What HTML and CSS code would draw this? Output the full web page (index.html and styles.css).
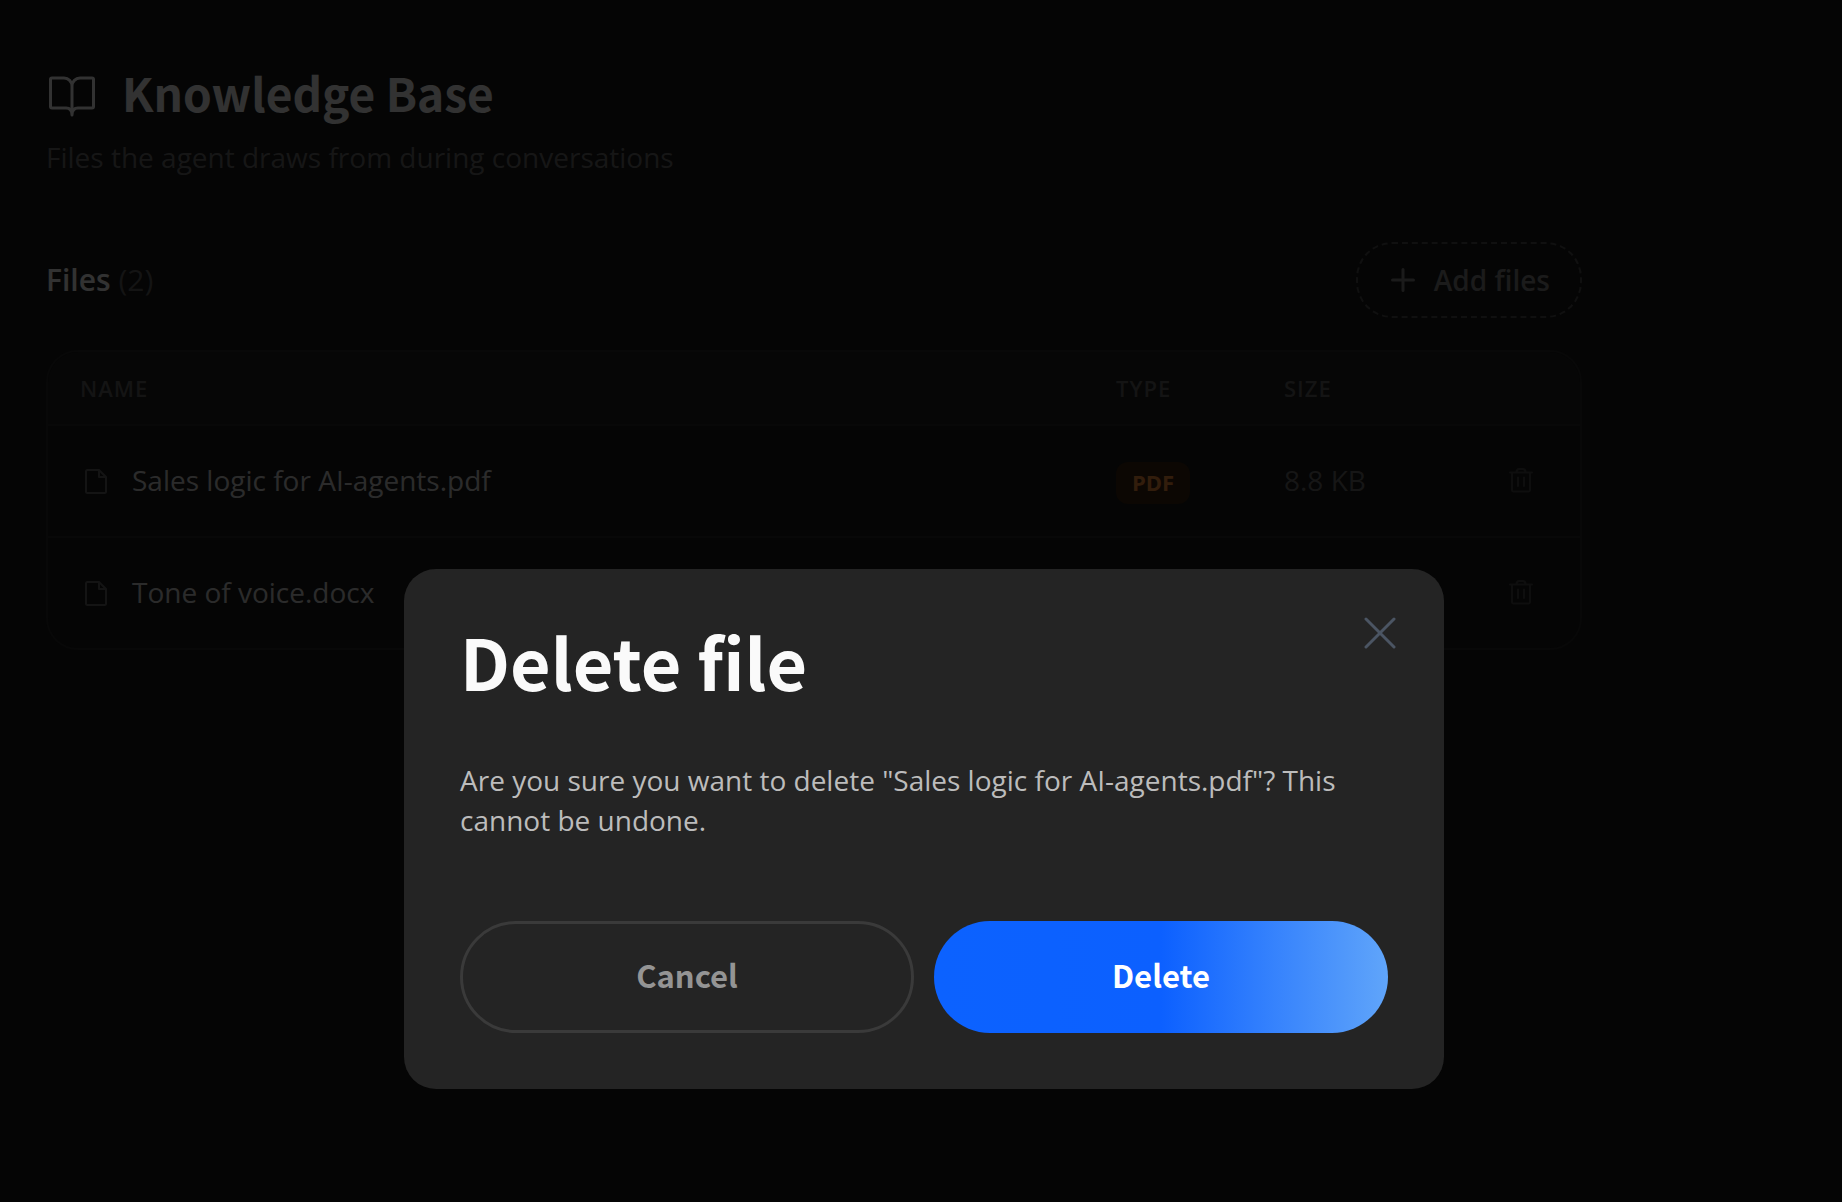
FILE: index.html
```html
<!DOCTYPE html>
<html lang="en">
<head>
<meta charset="utf-8">
<title>Knowledge Base</title>
<link rel="stylesheet" href="styles.css">
</head>
<body>
<main class="page">
  <header class="page-header">
    <div class="title-row">
      <svg class="title-icon" viewBox="0 2 52 56" aria-hidden="true"><path d="M26 24a8 8 0 0 0-8-8H6a1.500 1.500 0 0 0-1.500 1.500v27A1.500 1.500 0 0 0 6 46h14c4 0 6 2 6 7 0-5 2-7 6-7h14a1.500 1.500 0 0 0 1.500-1.500v-27A1.500 1.500 0 0 0 46 16H34a8 8 0 0 0-8 8v28"/></svg>
      <h1>Knowledge Base</h1>
    </div>
    <p class="subtitle">Files the agent draws from during conversations</p>
  </header>

  <section>
    <div class="section-header">
      <h2 class="section-title">Files <span class="count">(2)</span></h2>
      <button class="add-button" type="button">
        <svg class="plus-icon" viewBox="0 0 30 30" aria-hidden="true"><path d="M15 4.500v21M4.500 15h21"/></svg>
        <span>Add files</span>
      </button>
    </div>

    <div class="file-card">
      <table class="file-table">
        <thead>
          <tr>
            <th class="col-name" scope="col">NAME</th>
            <th class="col-type" scope="col">TYPE</th>
            <th class="col-size" scope="col">SIZE</th>
            <td class="col-action"></td>
          </tr>
        </thead>
        <tbody>
          <tr>
            <td class="col-name">
              <div class="file-name">
                <svg class="file-icon" viewBox="0 0 32 40" aria-hidden="true"><path d="M19 10H7.500A1.500 1.500 0 0 0 6 11.500v20A1.500 1.500 0 0 0 7.500 33h17a1.500 1.500 0 0 0 1.500-1.500V17zv7h7"/></svg>
                <span>Sales logic for AI-agents.pdf</span>
              </div>
            </td>
            <td><span class="badge badge-pdf">PDF</span></td>
            <td class="size">8.8 KB</td>
            <td class="col-action">
              <button class="icon-button" type="button" aria-label="Delete Sales logic for AI-agents.pdf">
                <svg viewBox="0 0 32 32" aria-hidden="true"><path d="M6 7.500h22M12.500 7.500C12.500 5 13.500 4 15 4h4c1.500 0 2.500 1 2.500 3.500M8 7.500V25a1.500 1.500 0 0 0 1.500 1.500h15A1.500 1.500 0 0 0 26 25V7.500M14 12.500V21M20 12.500V21"/></svg>
              </button>
            </td>
          </tr>
          <tr>
            <td class="col-name">
              <div class="file-name">
                <svg class="file-icon" viewBox="0 0 32 40" aria-hidden="true"><path d="M19 10H7.500A1.500 1.500 0 0 0 6 11.500v20A1.500 1.500 0 0 0 7.500 33h17a1.500 1.500 0 0 0 1.500-1.500V17zv7h7"/></svg>
                <span>Tone of voice.docx</span>
              </div>
            </td>
            <td></td>
            <td></td>
            <td class="col-action">
              <button class="icon-button" type="button" aria-label="Delete Tone of voice.docx">
                <svg viewBox="0 0 32 32" aria-hidden="true"><path d="M6 7.500h22M12.500 7.500C12.500 5 13.500 4 15 4h4c1.500 0 2.500 1 2.500 3.500M8 7.500V25a1.500 1.500 0 0 0 1.500 1.500h15A1.500 1.500 0 0 0 26 25V7.500M14 12.500V21M20 12.500V21"/></svg>
              </button>
            </td>
          </tr>
        </tbody>
      </table>
    </div>
  </section>
</main>

<div class="overlay">
  <div class="dialog" role="dialog" aria-modal="true" aria-labelledby="dialog-title">
    <button class="close-button" type="button" aria-label="Close">
      <svg viewBox="0 0 32 32" aria-hidden="true"><path d="M2 2l28 28M30 2L2 30"/></svg>
    </button>
    <h2 class="dialog-title" id="dialog-title">Delete file</h2>
    <p class="dialog-text">Are you sure you want to delete "Sales logic for AI-agents.pdf"? This cannot be undone.</p>
    <div class="dialog-actions">
      <button class="button button-outline" type="button">Cancel</button>
      <button class="button button-primary" type="button">Delete</button>
    </div>
  </div>
</div>
</body>
</html>
```
FILE: styles.css
```css
*,
*::before,
*::after {
  box-sizing: border-box;
}

body {
  margin: 0;
  min-height: 100vh;
  background: #191919;
  color: #fafafa;
  font-family: "Open Sans", sans-serif;
  font-size: 28px;
  line-height: 40px;
}

h1,
h2,
p {
  margin: 0;
}

button {
  margin: 0;
  padding: 0;
  border: 0;
  background: none;
  color: inherit;
  font: inherit;
  cursor: pointer;
}

svg {
  display: block;
  fill: none;
  stroke: currentColor;
  stroke-linecap: round;
  stroke-linejoin: round;
}

h1,
.dialog-title,
.button {
  font-family: "Noto Sans CJK JP", "Open Sans", sans-serif;
  font-weight: 700;
}

/* Page */
.page {
  max-width: 1582px;
  padding: 63px 0 48px 46px;
}

.page-header {
  margin-bottom: 65px;
}

.title-row {
  display: flex;
  align-items: center;
  gap: 24px;
  margin-bottom: 16px;
}

.title-icon {
  width: 52px;
  height: 56px;
  stroke-width: 3;
}

h1 {
  font-size: 46px;
  line-height: 58px;
}

.subtitle {
  color: #707070;
}

.section-header {
  display: flex;
  align-items: center;
  justify-content: space-between;
  margin-bottom: 32px;
}

.section-title {
  font-size: 30px;
  font-weight: 600;
}

.count {
  color: #646464;
  font-weight: 400;
}

.add-button {
  display: flex;
  align-items: center;
  gap: 16px;
  height: 76px;
  padding: 0 30px;
  border: 2px dashed #505050;
  border-radius: 36px;
  color: #868686;
  font-weight: 600;
}

.plus-icon {
  width: 30px;
  height: 30px;
  stroke-width: 3;
}

/* File table */
.file-card {
  overflow: hidden;
  border: 2px solid #282828;
  border-radius: 32px;
}

.file-table {
  width: 100%;
  border-collapse: separate;
  border-spacing: 0;
  table-layout: fixed;
}

.file-table th,
.file-table td {
  padding: 0;
  text-align: left;
}

.file-table thead th,
.file-table thead td {
  height: 74px;
  border-bottom: 2px solid #282828;
  background: #1e1e1e;
  color: #646464;
  font-size: 22px;
  font-weight: 600;
  letter-spacing: 1px;
}

.file-table tbody td {
  height: 110px;
  padding-top: 34px;
  vertical-align: top;
}

.file-table tbody tr:not(:last-child) td {
  height: 112px;
  border-bottom: 2px solid #282828;
}

.file-table .col-name {
  padding-left: 32px;
}

.col-type,
.col-size {
  width: 168px;
}

.file-table .col-action {
  width: 128px;
  padding-right: 32px;
}

.file-table tbody .col-action {
  padding-top: 0;
  vertical-align: middle;
}

.file-name {
  display: flex;
  align-items: center;
  gap: 20px;
  color: #d8d8d8;
}

.file-icon {
  width: 32px;
  height: 40px;
  color: #646464;
  stroke-width: 2;
}

.badge {
  display: inline-block;
  padding: 3px 16px 5px;
  border-radius: 12px;
  font-size: 22px;
  font-weight: 700;
  line-height: 34px;
}

.badge-pdf {
  background: #3c2412;
  color: #fb923c;
}

.size {
  color: #6e6e6e;
}

.icon-button {
  display: grid;
  place-items: center;
  width: 56px;
  height: 56px;
  margin-left: auto;
  color: #484848;
}

.icon-button svg {
  width: 32px;
  height: 32px;
  stroke-width: 2;
}

/* Dialog */
.overlay {
  position: absolute;
  inset: 0;
  display: flex;
  align-items: flex-end;
  justify-content: center;
  padding: 0 0 113px 6px;
  background: rgba(0, 0, 0, 0.8);
}

.dialog {
  position: relative;
  width: 100%;
  max-width: 1040px;
  padding: 56px;
  border-radius: 32px;
  background: #242424;
}

.close-button {
  position: absolute;
  top: 48px;
  right: 48px;
  color: #4b5563;
}

.close-button svg {
  width: 32px;
  height: 32px;
  stroke-width: 3;
}

.dialog-title {
  margin-bottom: 63px;
  font-size: 70px;
  line-height: 72px;
}

.dialog-text {
  margin-bottom: 81px;
  color: #bcbcbc;
}

.dialog-actions {
  display: grid;
  grid-template-columns: 1fr 1fr;
  gap: 20px;
}

.button {
  height: 112px;
  padding-bottom: 4px;
  border-radius: 56px;
  font-size: 31px;
}

.button-outline {
  border: 3px solid #3a3a3a;
  color: #949494;
}

.button-primary {
  background: linear-gradient(90deg, #0c62ff, #0c60ff 50%, #60a5fa);
  color: #ffffff;
}
```
